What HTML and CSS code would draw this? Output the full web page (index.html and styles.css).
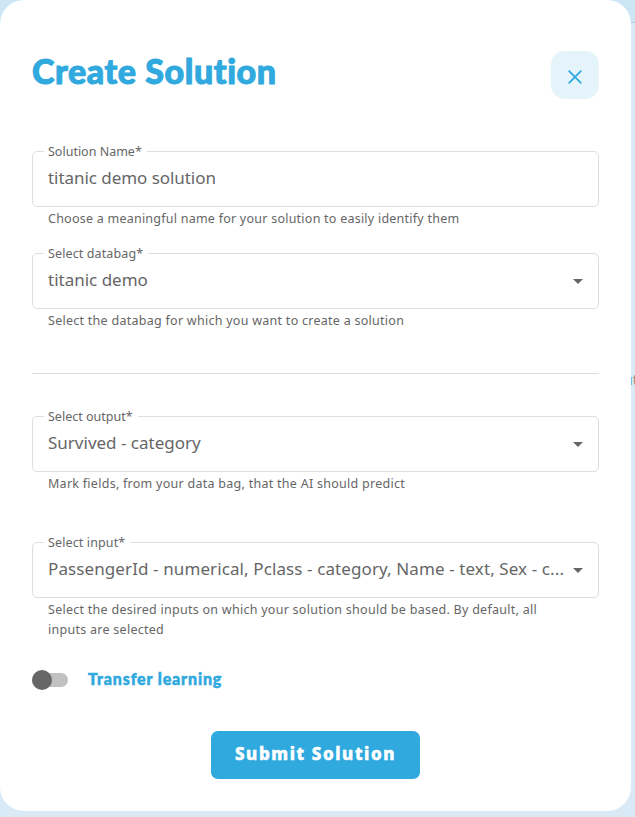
FILE: index.html
```html
<!DOCTYPE html>
<html lang="en">
<head>
<meta charset="utf-8">
<title>Create Solution</title>
<link rel="stylesheet" href="styles.css">
</head>
<body>
<div class="topbar"></div>
<span class="behind"><span class="behind-edge">ı</span>t</span>
<main class="dialog">
  <header class="header">
    <h1 class="title">Create Solution</h1>
    <button class="close" aria-label="Close">
      <svg width="14" height="14" viewBox="0 0 14 14"><path d="M.7.7 13.3 13.3M13.3.7.7 13.3"/></svg>
    </button>
  </header>
  <form class="form">
    <div class="field">
      <fieldset class="box"><legend class="label">Solution Name*</legend><span class="value value-name">titanic demo solution</span></fieldset>
      <p class="hint hint-name">Choose a meaningful name for your solution to easily identify them</p>
    </div>
    <div class="field">
      <fieldset class="box"><legend class="label label-select">Select databag*</legend><span class="value">titanic demo</span><i class="arrow"></i></fieldset>
      <p class="hint">Select the databag for which you want to create a solution</p>
    </div>
    <hr class="divider">
    <div class="field field-output">
      <fieldset class="box"><legend class="label">Select output*</legend><span class="value">Survived - category</span><i class="arrow"></i></fieldset>
      <p class="hint">Mark fields, from your data bag, that the AI should predict</p>
    </div>
    <div class="field">
      <fieldset class="box"><legend class="label label-select">Select input*</legend><span class="value value-input">PassengerId - numerical, Pclass - category, Name - text, Sex - c...</span><i class="arrow"></i></fieldset>
      <p class="hint">Select the desired inputs on which your solution should be based. By default, all<br>inputs are selected</p>
    </div>
    <div class="transfer">
      <span class="switch"><span class="knob"></span></span>
      <span class="transfer-label">Transfer learning</span>
    </div>
    <button class="submit" type="button">Submit Solution</button>
  </form>
</main>
</body>
</html>
```
FILE: styles.css
```css
* { box-sizing: border-box; }
body {
  margin: 0;
  height: 817px;
  overflow: hidden;
  background: #d9e9f6;
  color: #666;
  font-family: "Noto Sans", sans-serif;
}
.topbar {
  position: absolute;
  top: 0;
  left: 0;
  width: 100%;
  height: 23px;
  background: #cde6f5;
  border-bottom: 1px solid #b4cbdd;
}
.behind {
  position: absolute;
  left: 629px;
  top: 371px;
  font-size: 14px;
  line-height: 18px;
  color: #a58a78;
}
.behind-edge { color: #4b8fc8; }
.dialog {
  position: relative;
  width: 631px;
  height: 811px;
  padding: 51px 32px 32px;
  border-radius: 24px;
  background: #fff;
}
.header { display: flex; justify-content: space-between; height: 92px; }
.title {
  margin: -1px 0 0;
  font: 900 34px/42px Lato, sans-serif;
  letter-spacing: .58px;
  color: #2fa9de;
  -webkit-text-stroke: 1px #2fa9de;
  white-space: nowrap;
}
.close {
  display: flex;
  align-items: center;
  justify-content: center;
  width: 48px;
  height: 48px;
  padding: 4px 1px 0 0;
  border: 0;
  border-radius: 14px;
  background: #e5f4fb;
}
.close svg { fill: none; stroke: #2fa9de; stroke-width: 1.8; }
.form { display: flex; flex-direction: column; }
.field { height: 102px; }
.box {
  position: relative;
  display: flex;
  align-items: center;
  width: 567px;
  height: 64px;
  min-width: 0;
  margin: 0;
  padding: 0 15px 9px 11px;
  border: 1px solid #dedede;
  border-radius: 5px;
}
.label { height: 16px; padding: 0 5px 0 4px; font-size: 12.5px; line-height: 18px; white-space: nowrap; }
.label-select { letter-spacing: .12px; }
.value { padding-left: 4px; font-size: 17px; line-height: 24px; white-space: nowrap; }
.value-name { letter-spacing: -.05px; }
.value-input { letter-spacing: .1px; }
.arrow {
  margin: 2px 0 0 auto;
  border: 5px solid transparent;
  border-top-color: #666;
  border-bottom: 0;
}
.hint { margin: 2px 16px 0; font-size: 12.5px; line-height: 20px; letter-spacing: .27px; white-space: nowrap; }
.hint-name { letter-spacing: .24px; }
.divider { width: 100%; height: 1px; margin: 26px 0 34px; border: 0; background: #dedede; }
.field-output { height: 126px; }
.transfer { display: flex; align-items: center; height: 24px; margin-top: 32px; }
.switch { display: flex; align-items: center; width: 36px; height: 14px; border-radius: 7px; background: #c1c1c1; }
.knob { flex: none; width: 20px; height: 20px; border-radius: 50%; background: #666; }
.transfer-label {
  margin: -2px 0 0 20px;
  font: 900 16px/24px Lato, sans-serif;
  letter-spacing: .85px;
  color: #2fa9de;
  -webkit-text-stroke: .5px #2fa9de;
}
.submit {
  align-self: center;
  width: 209px;
  height: 48px;
  margin-top: 39px;
  padding: 0 0 2px;
  border: 0;
  border-radius: 7px;
  background: #2fa9de;
  color: #fff;
  font: 800 17px/24px "Noto Sans", sans-serif;
  letter-spacing: 1.6px;
  -webkit-text-stroke: .5px #fff;
}
```
